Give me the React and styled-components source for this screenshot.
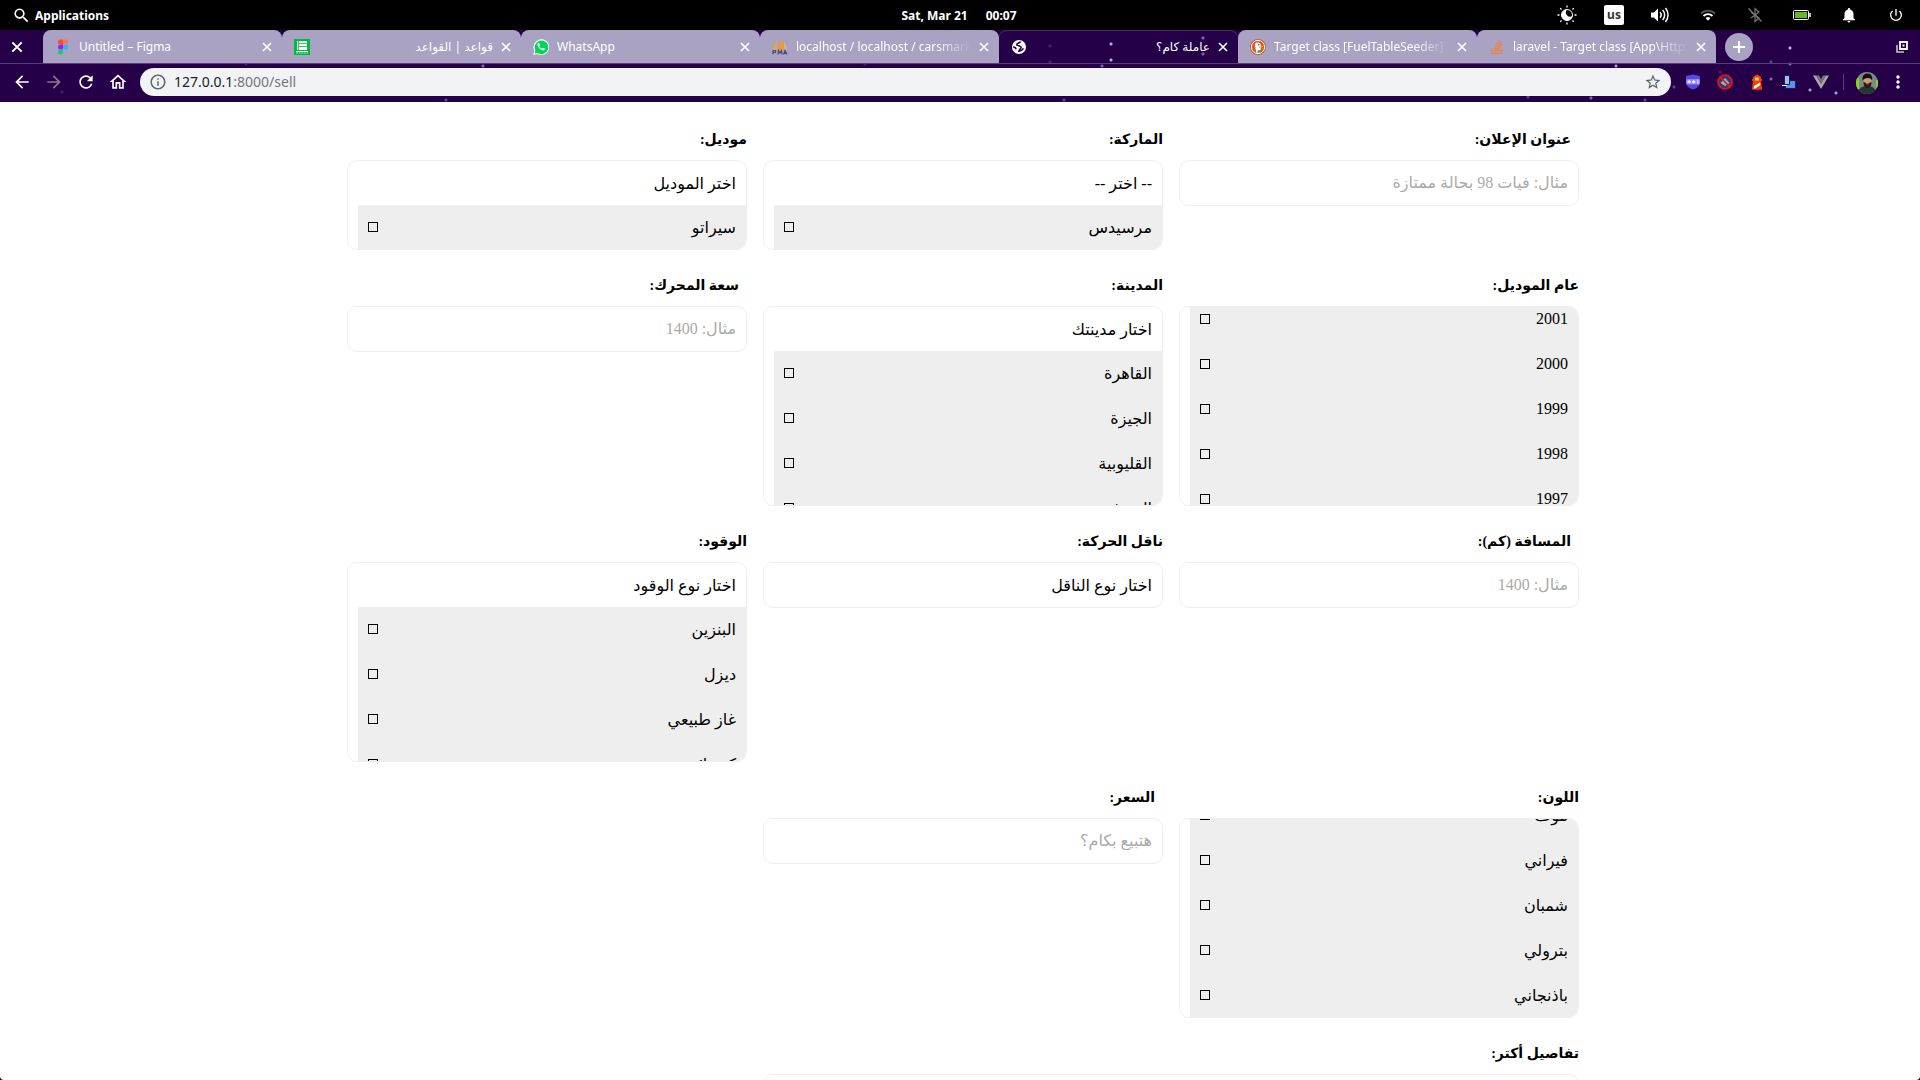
import React, { useLayoutEffect, useRef, useState } from "react";
import styled, { createGlobalStyle, css } from "styled-components";
import {
  MdArrowBack,
  MdArrowForward,
  MdRefresh,
  MdOutlineHome,
  MdInfoOutline,
  MdStarBorder,
  MdMoreVert,
  MdSearch,
  MdNotifications,
  MdPowerSettingsNew,
} from "react-icons/md";
import { FaStackOverflow } from "react-icons/fa";

const chromeFont = '"Noto Sans", "Open Sans", "DejaVu Sans", sans-serif';
const formFont = '"Liberation Serif", "DejaVu Sans", serif';

const GlobalStyle = createGlobalStyle`
  *, *::before, *::after { box-sizing: border-box; }
  html, body { margin: 0; background: #000; }
  button, input, textarea { font: inherit; color: inherit; }
  button { border: 0; padding: 0; background: none; cursor: pointer; }
  svg { display: block; flex: none; }
`;

const Screen = styled.div`
  display: flex;
  flex-direction: column;
  height: 100vh;
  overflow: hidden;
  font-family: ${chromeFont};
`;

/* ---------- desktop panel ---------- */

const Panel = styled.header`
  display: grid;
  grid-template-columns: 1fr auto 1fr;
  align-items: center;
  flex: none;
  height: 30px;
  padding: 0 14px 0 12px;
  background: #000;
  color: #fff;
  font-size: 12px;
  font-weight: 700;
`;

const PanelButton = styled.button`
  display: flex;
  align-items: center;
  gap: 4px;
  justify-self: start;
`;

const Clock = styled.div`
  display: flex;
  gap: 18px;
`;

const Indicators = styled.div`
  display: flex;
  align-items: center;
  justify-content: flex-end;
  gap: 27px;
`;

const Indicator = styled.span`
  display: grid;
  place-items: center;
  width: 20px;
  height: 20px;
`;

const KeyboardLayout = styled(Indicator)`
  border-radius: 2px;
  background: #fff;
  color: #333;
  line-height: 18px;
`;

/* ---------- browser frame ---------- */

const star = (x, y, color = "#7767b8") =>
  `radial-gradient(circle at ${x}px ${y}px, ${color} 0, ${color} 1px, transparent 2px)`;

const stars = [
  star(1111, 14, "#b3a9ee"), star(1111, 30, "#b3a9ee"), star(1102, 36), star(1203, 8), star(1203, 24),
  star(1050, 16, "#43217a"), star(1050, 32, "#43217a"), star(1064, 70, "#5b4398"), star(483, 36),
  star(446, 70, "#5b4398"), star(865, 34, "#43217a"), star(1790, 18, "#c0b5f5"), star(1790, 34),
  star(1771, 32, "#5b4398"), star(1771, 49), star(1674, 57, "#5b4398"), star(1720, 42, "#43217a"),
  star(1810, 60, "#a498e0"), star(1836, 63, "#a498e0"), star(1591, 68), star(1528, 67, "#5b4398"),
  star(1645, 70, "#5b4398"), star(1616, 36, "#a498e0"), star(246, 34, "#43217a"), star(62, 62, "#43217a"),
].join(",");

const Frame = styled.div`
  flex: none;
  background: ${stars}, #250048;
  color: #fff;
`;

const TabStrip = styled.div`
  display: flex;
  align-items: center;
  height: 34px;
  padding-right: 9px;
  border-bottom: 1px solid #5a3c7c;
`;

const WindowButton = styled.button`
  display: grid;
  place-items: center;
  width: 43px;
  height: 33px;
  padding-right: 9px;
`;

const MaximizeButton = styled.button`
  display: grid;
  place-items: center;
  width: 18px;
  height: 18px;
  margin-left: auto;
`;

const Tabs = styled.div`
  display: flex;
  flex: 0 1 1673px;
  min-width: 0;
  height: 33px;
`;

const Tab = styled.div`
  display: flex;
  align-items: center;
  flex: 1 1 0;
  min-width: 0;
  height: 33px;
  padding: 0 9px 0 12px;
  position: relative;
  border-radius: 8px 8px 0 0;
  background: #a9a2c2;

  ${(p) =>
    p.$divided &&
    css`
      &::after {
        content: "";
        position: absolute;
        right: -1px;
        top: 7px;
        width: 1px;
        height: 20px;
        background: #fff;
      }
    `}

  ${(p) =>
    p.$active &&
    css`
      background: transparent;
      box-shadow: inset 0 1px 0 #4a2c6c;
    `}
`;

const TabTitle = styled.button`
  display: flex;
  align-items: center;
  flex: 1;
  min-width: 0;
  height: 32px;
  gap: 8px;
  font-size: 12px;
`;

const TabText = styled.span`
  flex: 1;
  min-width: 0;
  overflow: hidden;
  white-space: nowrap;
  text-align: left;
  line-height: 20px;
  ${(p) => p.$rtl && "direction: rtl; text-align: right;"}
  ${(p) => p.$fade && "mask-image: linear-gradient(to right, #000 80%, transparent);"}
`;

const TabClose = styled.button`
  display: grid;
  place-items: center;
  flex: none;
  width: 12px;
  height: 16px;
  margin-left: 7px;
`;

const NewTab = styled.button`
  display: grid;
  place-items: center;
  flex: none;
  width: 28px;
  height: 28px;
  margin-left: 9px;
  border-radius: 50%;
  background: #a9a2c2;
`;

const Toolbar = styled.div`
  display: flex;
  align-items: center;
  height: 38px;
  padding: 0 12px 2px;
  gap: 12px;
`;

const ToolButton = styled.button`
  display: grid;
  place-items: center;
  flex: none;
  width: 20px;
  height: 20px;
  opacity: ${(p) => (p.$dim ? 0.45 : 1)};
`;

const Omnibox = styled.div`
  display: flex;
  align-items: center;
  flex: 1;
  min-width: 0;
  height: 28px;
  padding: 0 9px;
  border-radius: 14px;
  background: #f1f3f4;
  color: #5f6368;
`;

const AddressText = styled.a`
  flex: 1;
  padding-left: 7px;
  color: #73777b;
  font-size: 14px;
  line-height: 20px;
  text-decoration: none;
`;

const Host = styled.span`
  color: #202124;
`;

const Separator = styled.span`
  width: 1px;
  height: 16px;
  background: #5a3c7c;
`;

/* ---------- page ---------- */

const Page = styled.main`
  flex: 1;
  min-height: 0;
  overflow: hidden;
  padding: 26px 16px 0 22px;
  border-radius: 0 0 4px 4px;
  background: #fff;
  color: #000;
  font-family: ${formFont};
  font-size: 16px;
`;

const Form = styled.form`
  display: grid;
  grid-template-columns: repeat(3, minmax(0, 1fr));
  gap: 24px 16px;
  max-width: 1232px;
  margin: 0 auto;
`;

const Field = styled.div`
  display: flex;
  flex-direction: column;
  grid-column: ${(p) => (p.$wide ? "1 / span 2" : "auto")};
`;

const Caption = styled.label`
  margin-bottom: 8px;
  padding-right: ${(p) => (p.$inset ? "8px" : "0")};
  font-size: 14px;
  font-weight: 700;
  line-height: 24px;
`;

const boxed = css`
  border: 1px solid #eee;
  border-radius: 10px;
  background: #fff;
`;

const TextInput = styled.input`
  ${boxed}
  width: 100%;
  height: 46px;
  padding: 0 10px;
  outline: 0;
  &::placeholder { color: #aaa; opacity: 1; }
`;

const TextArea = styled.textarea`
  ${boxed}
  width: 100%;
  height: 160px;
  padding: 10px;
  resize: none;
  outline: 0;
`;

const Picker = styled.div`
  ${boxed}
  max-height: 200px;
  overflow-y: auto;
  scrollbar-width: none;
`;

const PickerHead = styled.button`
  display: block;
  width: 100%;
  height: 44px;
  padding: 0 10px;
  text-align: right;
`;

const Options = styled.ul`
  display: grid;
  gap: 1px;
  margin: 0 0 0 10px;
  padding: 0;
  background: #eee;
  list-style: none;
`;

const Option = styled.label`
  display: flex;
  align-items: center;
  justify-content: space-between;
  height: 44px;
  padding: 0 10px;
`;

const Tick = styled.input`
  appearance: none;
  width: 10px;
  height: 10px;
  margin: 0;
  border: 1px solid #000;
  &:checked { background: #000; }
`;

/* ---------- drawings ---------- */

const Cross = ({ size = 14 }) => (
  <svg width={size} height={size} viewBox="0 0 12 12" aria-hidden="true">
    <path d="M2 2l8 8M10 2l-8 8" stroke="#fff" strokeWidth="1.7" />
  </svg>
);

const FigmaIcon = () => (
  <svg width="16" height="16" viewBox="0 0 16 16">
    <path d="M5.5.5H8v5H5.500a2.500 2.500 0 010-5z" fill="#f24e1e" />
    <path d="M8 .5h2.500a2.500 2.500 0 010 5H8z" fill="#ff7262" />
    <path d="M5.500 5.500H8v5H5.500a2.500 2.500 0 010-5z" fill="#b014ff" />
    <circle cx="10.500" cy="8" r="2.500" fill="#1abcfe" />
    <path d="M5.500 10.500H8V13a2.500 2.500 0 11-2.500-2.500z" fill="#0acf83" />
  </svg>
);

const SheetIcon = () => (
  <svg width="16" height="16" viewBox="0 0 16 16">
    <path d="M0 0h16v16H0z" fill="#00b844" />
    <path d="M3 2h10v9H3z" fill="#fff" />
    <path d="M5 4.500h8M5 7.500h8M4.500 2v9" stroke="#00b844" strokeWidth=".8" />
    <path d="M2 12.500h12" stroke="#fff" />
    <path d="M2 14h12" stroke="#9fe6b8" strokeDasharray="2 .6" />
  </svg>
);

const WhatsAppIcon = () => (
  <svg width="16" height="16" viewBox="0 0 16 16">
    <path d="M.2 15.900l1.200-4.200A7.900 7.900 0 118 16a8 8 0 01-3.600-1z" fill="#fff" />
    <path d="M1.500 14.600l.9-3.200A6.800 6.800 0 114.700 14z" fill="#00d757" />
    <path d="M5.300 4c-.9.500-1.100 1.500-.7 2.500.8 2.200 2.800 4.200 5.100 4.800 1.100.2 2-.4 2.200-1.500L10 8.800l-.9 1C7.800 9.300 6.900 8.400 6.300 7.200l.7-.9L6.200 4z" fill="#fff" />
  </svg>
);

const PmaIcon = () => (
  <svg width="16" height="16" viewBox="0 0 16 16">
    <path d="M5 1v9.500H1C1.500 7 3 3.500 5 1z" fill="#f2a13a" />
    <path d="M9 .5c2 2.500 2.700 6 2.500 10H6C7.500 7.500 8.500 4 9 .5z" fill="#f8981d" />
    <path d="M12 2.500c1.500 2 2.500 5 2.500 8h-2.200c.3-3 .2-5.500-.3-8z" fill="#f2b566" />
    <path d="M1 15.500v-4h2.500v2H1M6 15.500l.5-4 1.500 2.500 1.500-2.500.5 4M11.500 15.500l1.500-4 2 4M12 14.300h2.500" fill="none" stroke="#4b4a78" strokeWidth="1.200" />
  </svg>
);

const DuckIcon = () => (
  <svg width="16" height="16" viewBox="0 0 16 16">
    <circle cx="8" cy="8" r="8" fill="#de5833" />
    <circle cx="8" cy="8" r="6.600" fill="none" stroke="#fff" />
    <path d="M6.500 14L5 7c-.4-2 .5-3.500 2.300-3.500C9.800 3.500 11 5 10.700 7.500L10.500 14z" fill="#fff" />
    <path d="M8.800 7.500l3.700-.5c.8.600-.5 1.600-3.500 1.900z" fill="#fdc80d" />
    <path d="M7.500 11.500l4-.8v2.500l-4 .8z" fill="#3ca82b" />
    <circle cx="8.800" cy="5.800" r=".7" fill="#2d4f8e" />
  </svg>
);

const GlobeIcon = () => (
  <svg width="16" height="16" viewBox="0 0 16 16">
    <circle cx="8" cy="8" r="7" fill="#fff" />
    <path d="M9.500 2.500C9 4.300 6 3.700 5.800 5.500c0 1.800 4.200.8 4.300 2.900 0 1.600-1.800 1.300-2.100 3.800 1.900-.2 3.600-1.300 4.500-2.800M2.200 8.200c1.300-.2 2.600.6 2.900 2.100" fill="none" stroke="#250048" strokeWidth="1.600" />
  </svg>
);

const NightLightIcon = () => (
  <svg width="20" height="20" viewBox="0 0 20 20">
    <circle cx="10" cy="10" r="5.500" fill="none" stroke="#fff" />
    <path d="M10 4.500A5.500 5.500 0 1015.500 11 4.300 4.300 0 0110 4.500z" fill="#fff" />
    <path d="M10 .5v2M10 17.500v2M.5 10h2M17.500 10h2M3.300 3.300l1.200 1.200M15.500 15.500l1.200 1.200M3.300 16.700l1.200-1.200M15.500 4.500l1.200-1.200" stroke="#fff" strokeWidth="1.300" />
  </svg>
);

const VolumeIcon = () => (
  <svg width="20" height="16" viewBox="0 0 20 16">
    <path d="M0 5.500h2.800L7 1.500v13l-4.200-4H0z" fill="#fff" />
    <path d="M9 5.300a4 4 0 010 5.400M11.700 3a7.500 7.500 0 010 10M14.500 1a11 11 0 010 14" fill="none" stroke="#fff" strokeWidth="1.500" />
  </svg>
);

const WifiIcon = () => (
  <svg width="16" height="16" viewBox="0 0 16 16">
    <path d="M1 6.500a10 10 0 0114 0" fill="none" stroke="#555" strokeWidth="1.800" />
    <path d="M3.500 9a6.500 6.500 0 019 0" fill="none" stroke="#fff" strokeWidth="1.800" />
    <path d="M5.600 11.200a3.500 3.500 0 014.800 0L8 13.800z" fill="#fff" />
  </svg>
);

const BluetoothIcon = () => (
  <svg width="16" height="16" viewBox="0 0 16 16">
    <path d="M4 5l8 6-4 3.500v-13L12 5l-8 6" fill="none" stroke="#777" strokeWidth="1.200" />
    <path d="M1.500 1.500l13 13" stroke="#777" strokeWidth="1.400" />
  </svg>
);

const BatteryIcon = () => (
  <svg width="18" height="12" viewBox="0 0 18 12">
    <rect x=".5" y="1.500" width="15" height="9" rx="1" fill="none" stroke="#fff" />
    <rect x="2" y="3" width="12" height="6" fill="#68b723" />
    <path d="M17 4v4" stroke="#fff" strokeWidth="1.500" />
  </svg>
);

const RestoreIcon = () => (
  <svg width="12" height="12" viewBox="0 0 12 12">
    <path d="M4 1h7v7H4z" fill="none" stroke="#fff" strokeWidth="1.800" />
    <path d="M1 4v7h7" fill="none" stroke="#c9c0dc" strokeWidth="1.600" />
    <path d="M6.500 3.500h2v2h-2z" fill="#fff" />
  </svg>
);

const ShieldIcon = () => (
  <svg width="16" height="16" viewBox="0 0 16 16">
    <path d="M1 2l7-1.500L15 2v6.500c0 3.500-3.500 6-7 7-3.500-1-7-3.500-7-7z" fill="#5746e8" />
    <rect x="1" y="5" width="14" height="5.500" rx="1.500" fill="#8f86f5" />
    <path d="M4.200 6v3.500M2.600 7.200l3.200 1.300M5.800 7.200L2.600 8.500M8.700 6v3.500M7.100 7.200l3.200 1.300M10.300 7.200L7.100 8.500M12.800 5.500v4.500" stroke="#fff" strokeWidth=".9" />
  </svg>
);

const BlockIcon = () => (
  <svg width="16" height="16" viewBox="0 0 16 16">
    <circle cx="8" cy="8" r="7" fill="#27406e" stroke="#f20d16" strokeWidth="1.700" />
    <path d="M3.500 9L8 4l4.500 5L8 12z" fill="#8fb0d2" />
    <path d="M3 3l10 10" stroke="#f20d16" strokeWidth="1.700" />
  </svg>
);

const LighthouseIcon = () => (
  <svg width="16" height="16" viewBox="0 0 16 16">
    <path d="M8 .3L12 3v2h1v2h-1l1.200 8.700H2.800L4 7H3V5h1V3z" fill="#f63b0c" />
    <path d="M6 3.500h4v3H6z" fill="#ffd54a" />
    <path d="M5 12l6-3.500.3 2.500-5 3.500H4.700z" fill="#fff" />
  </svg>
);

const BlocksIcon = () => (
  <svg width="16" height="16" viewBox="0 0 16 16">
    <path d="M3.500 1.500h5v9h-5z" fill="#9bbdf9" stroke="#1f1b3a" />
    <path d="M8.500 6.500h6v8h-10v-4h4z" fill="#5c8df6" stroke="#1f1b3a" />
    <path d="M1 11.500h5" stroke="#fff" />
  </svg>
);

const VueIcon = () => (
  <svg width="16" height="16" viewBox="0 0 16 16">
    <path d="M0 1.500h3.200L8 9.700l4.800-8.200H16L8 15z" fill="#aaa6ad" />
    <path d="M3.200 1.500H6L8 5l2-3.500h2.800L8 9.700z" fill="#77737b" />
  </svg>
);

const Avatar = () => (
  <svg width="22" height="22" viewBox="0 0 22 22">
    <defs>
      <clipPath id="avatar-clip"><circle cx="11" cy="11" r="11" /></clipPath>
    </defs>
    <g clipPath="url(#avatar-clip)">
      <path d="M0 0h22v22H0z" fill="#7c8a84" />
      <path d="M0 6h3v11H0zM20 8h2v8h-2z" fill="#86d322" />
      <path d="M2 22c0-5 3-8 9-8s9 3 9 8z" fill="#26352f" />
      <ellipse cx="11.500" cy="9" rx="4" ry="5.500" fill="#c99c7d" />
      <path d="M6.500 9C6 3.500 8 1.500 11.500 1.500c3.500 0 5.500 2.800 4.500 7C15.500 6 9 4.500 6.500 9z" fill="#17120f" />
      <path d="M7.500 10c2.500 1.500 5.500 1.500 8 0 .3 4-2 6-4 6s-4.300-2-4-6z" fill="#2a1c15" />
      <path d="M10 11.800h3" stroke="#b58468" />
    </g>
  </svg>
);

/* ---------- data ---------- */

const tabs = [
  { title: "Untitled – Figma", icon: <FigmaIcon />, divided: true },
  { title: "قواعد | القواعد", icon: <SheetIcon />, rtl: true, divided: true },
  { title: "WhatsApp", icon: <WhatsAppIcon />, divided: true },
  { title: "localhost / localhost / carsmarket", icon: <PmaIcon />, fade: true },
  { title: "عاملة كام؟", icon: <GlobeIcon />, rtl: true, active: true },
  { title: "Target class [FuelTableSeeder]", icon: <DuckIcon />, fade: true, divided: true },
  { title: "laravel - Target class [App\\Http\\", icon: <FaStackOverflow size={16} color="#ef8236" />, fade: true },
];

const fields = [
  { id: "title", label: "عنوان الإعلان:", placeholder: "مثال: فيات 98 بحالة ممتازة" },
  { id: "brand", label: "الماركة:", head: "-- اختر --", options: ["مرسيدس"] },
  { id: "model", label: "موديل:", head: "اختر الموديل", options: ["سيراتو"] },
  { id: "year", label: "عام الموديل:", options: ["2001", "2000", "1999", "1998", "1997"], scroll: 10 },
  { id: "city", label: "المدينة:", head: "اختار مدينتك", options: ["القاهرة", "الجيزة", "القليوبية", "المنوفية"] },
  { id: "engine", label: "سعة المحرك:", placeholder: "مثال: 1400" },
  { id: "distance", label: "المسافة (كم):", placeholder: "مثال: 1400" },
  { id: "gear", label: "ناقل الحركة:", head: "اختار نوع الناقل", options: [] },
  { id: "fuel", label: "الوقود:", head: "اختار نوع الوقود", options: ["البنزين", "ديزل", "غاز طبيعي", "كهربائي"] },
  { id: "color", label: "اللون:", options: ["موف", "فيراني", "شمبان", "بترولي", "باذنجاني"], scroll: 26 },
  { id: "price", label: "السعر:", placeholder: "هتبيع بكام؟" },
];

function OptionPicker({ id, head, options, scroll = 0 }) {
  const box = useRef(null);
  const [chosen, setChosen] = useState([]);

  useLayoutEffect(() => {
    box.current.scrollTop = scroll;
  }, [scroll]);

  const toggle = (name) =>
    setChosen((list) => (list.includes(name) ? list.filter((n) => n !== name) : [...list, name]));

  return (
    <Picker ref={box} role="group" aria-labelledby={`${id}-caption`}>
      {head && <PickerHead type="button" id={id}>{head}</PickerHead>}
      {options.length > 0 && (
        <Options>
          {options.map((name, i) => (
            <li key={name}>
              <Option>
                {name}
                <Tick
                  id={!head && i === 0 ? id : undefined}
                  type="checkbox"
                  checked={chosen.includes(name)}
                  onChange={() => toggle(name)}
                />
              </Option>
            </li>
          ))}
        </Options>
      )}
    </Picker>
  );
}

export default function App() {
  return (
    <Screen>
      <GlobalStyle />
      <Panel>
        <PanelButton type="button">
          <MdSearch size={19} />
          Applications
        </PanelButton>
        <Clock>
          <span>Sat, Mar 21</span>
          <span>00:07</span>
        </Clock>
        <Indicators>
          <Indicator><NightLightIcon /></Indicator>
          <KeyboardLayout>us</KeyboardLayout>
          <Indicator><VolumeIcon /></Indicator>
          <Indicator><WifiIcon /></Indicator>
          <Indicator><BluetoothIcon /></Indicator>
          <Indicator><BatteryIcon /></Indicator>
          <Indicator><MdNotifications size={18} /></Indicator>
          <Indicator><MdPowerSettingsNew size={16} /></Indicator>
        </Indicators>
      </Panel>

      <Frame>
        <TabStrip>
          <WindowButton type="button" aria-label="Close window"><Cross size={14} /></WindowButton>
          <Tabs>
            {tabs.map((tab) => (
              <Tab key={tab.title} $active={tab.active} $divided={tab.divided}>
                <TabTitle type="button">
                  {tab.icon}
                  <TabText $rtl={tab.rtl} $fade={tab.fade}>{tab.title}</TabText>
                </TabTitle>
                <TabClose type="button" aria-label="Close tab"><Cross size={12} /></TabClose>
              </Tab>
            ))}
          </Tabs>
          <NewTab type="button" aria-label="New tab">
            <svg width="12" height="12" viewBox="0 0 12 12"><path d="M6 0v12M0 6h12" stroke="#fff" strokeWidth="2" /></svg>
          </NewTab>
          <MaximizeButton type="button" aria-label="Restore window"><RestoreIcon /></MaximizeButton>
        </TabStrip>
        <Toolbar>
          <ToolButton type="button" aria-label="Back"><MdArrowBack size={20} /></ToolButton>
          <ToolButton type="button" aria-label="Forward" $dim><MdArrowForward size={20} /></ToolButton>
          <ToolButton type="button" aria-label="Reload"><MdRefresh size={20} /></ToolButton>
          <ToolButton type="button" aria-label="Home"><MdOutlineHome size={20} /></ToolButton>
          <Omnibox>
            <MdInfoOutline size={18} />
            <AddressText href="#sell"><Host>127.0.0.1</Host>:8000/sell</AddressText>
            <MdStarBorder size={18} />
          </Omnibox>
          <ToolButton type="button" aria-label="Password manager"><ShieldIcon /></ToolButton>
          <ToolButton type="button" aria-label="Blocker"><BlockIcon /></ToolButton>
          <ToolButton type="button" aria-label="Lighthouse"><LighthouseIcon /></ToolButton>
          <ToolButton type="button" aria-label="Blocks"><BlocksIcon /></ToolButton>
          <ToolButton type="button" aria-label="Vue"><VueIcon /></ToolButton>
          <Separator />
          <ToolButton type="button" aria-label="Profile"><Avatar /></ToolButton>
          <ToolButton type="button" aria-label="Menu"><MdMoreVert size={20} /></ToolButton>
        </Toolbar>
      </Frame>

      <Page dir="rtl" lang="ar">
        <Form>
          {fields.map((f) => (
            <Field key={f.id}>
              <Caption id={`${f.id}-caption`} htmlFor={f.id} $inset={!f.options}>{f.label}</Caption>
              {f.options ? <OptionPicker {...f} /> : <TextInput id={f.id} type="text" placeholder={f.placeholder} />}
            </Field>
          ))}
          <Field $wide>
            <Caption htmlFor="details">تفاصيل أكتر:</Caption>
            <TextArea id="details" />
          </Field>
        </Form>
      </Page>
    </Screen>
  );
}
